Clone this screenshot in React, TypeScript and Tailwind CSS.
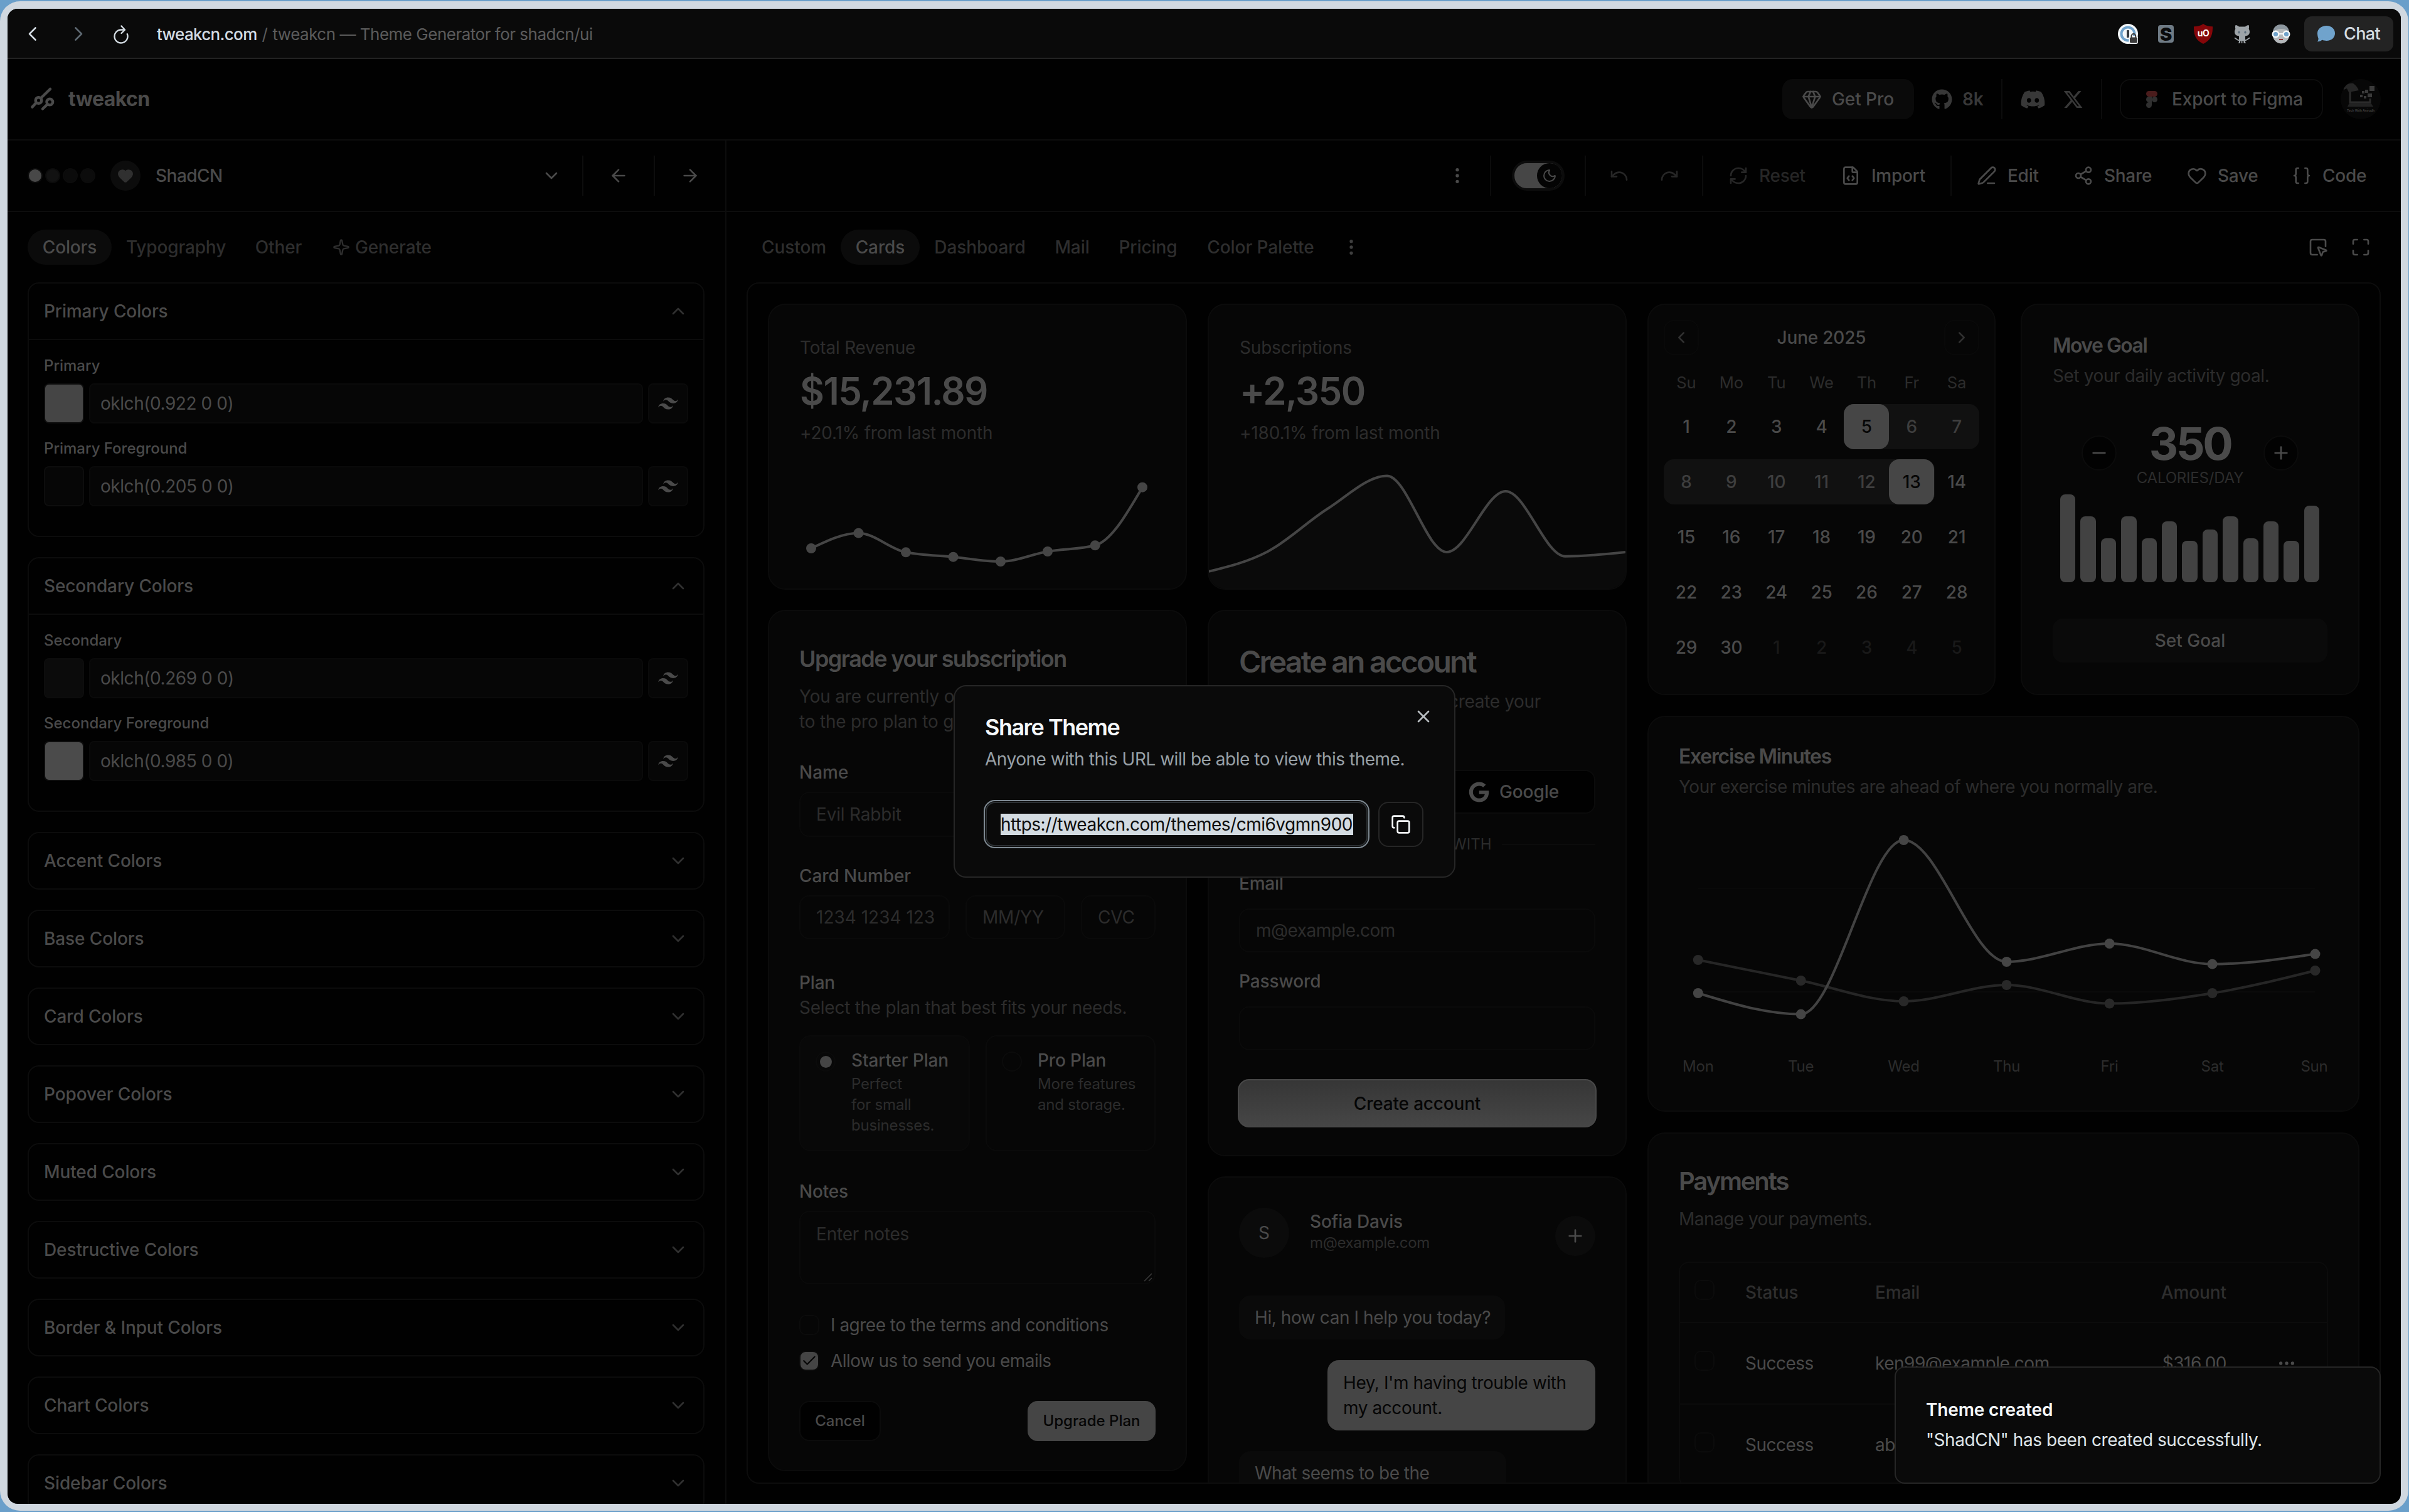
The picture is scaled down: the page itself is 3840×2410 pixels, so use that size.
import React from "react";
import {
  ArrowLeft,
  ArrowRight,
  Braces,
  Check,
  ChevronDown,
  ChevronLeft,
  ChevronRight,
  ChevronUp,
  Copy,
  Ellipsis,
  EllipsisVertical,
  FileCode,
  Gem,
  Heart,
  Maximize,
  Minus,
  Moon,
  PenLine,
  Plus,
  Redo,
  RefreshCw,
  Share2,
  Sparkle,
  SquareMousePointer,
  Undo,
  X,
} from "lucide-react";
import { FaDiscord, FaGithub, FaGoogle, FaXTwitter } from "react-icons/fa6";
import { SiTailwindcss } from "react-icons/si";

type Point = [number, number];

// Monotone cubic interpolation, the same curve d3's curveMonotoneX gives
function monotonePath(pts: Point[]) {
  const n = pts.length;
  const slope = pts.slice(1).map((p, i) => (p[1] - pts[i][1]) / (p[0] - pts[i][0]));
  const t: number[] = new Array(n).fill(0);
  for (let i = 1; i < n - 1; i++) {
    const a = slope[i - 1];
    const b = slope[i];
    t[i] = a * b <= 0 ? 0 : Math.sign(a) * Math.min(Math.abs(a), Math.abs(b), 0.25 * Math.abs(a + b)) * 2;
  }
  t[0] = (3 * slope[0] - t[1]) / 2;
  t[n - 1] = (3 * slope[n - 2] - t[n - 2]) / 2;
  let d = `M${pts[0][0]},${pts[0][1]}`;
  for (let i = 0; i < n - 1; i++) {
    const dx = (pts[i + 1][0] - pts[i][0]) / 3;
    d += `C${pts[i][0] + dx},${pts[i][1] + dx * t[i]} ${pts[i + 1][0] - dx},${pts[i + 1][1] - dx * t[i + 1]} ${pts[i + 1][0]},${pts[i + 1][1]}`;
  }
  return d;
}

const revenue: Point[] = [
  [1293, 874], [1368.5, 849.7], [1444, 880.3], [1519.5, 887.7],
  [1595, 895], [1670, 879], [1745.6, 869.3], [1821, 776.7],
];
const subscriptions: Point[] = [
  [1926, 911], [2021, 879], [2116, 811], [2211, 758.6],
  [2306, 880], [2400, 783], [2495, 886.7], [2591, 880],
];
const exerciseToday: Point[] = [
  [2706.8, 1582], [2870.7, 1615.6], [3034.6, 1338], [3198.6, 1532],
  [3362.6, 1503], [3526.5, 1535.7], [3690.5, 1519.6],
];
const exerciseAverage: Point[] = [
  [2706.8, 1529], [2870.7, 1562], [3034.6, 1595], [3198.6, 1569],
  [3362.6, 1598.6], [3526.5, 1582], [3690.5, 1546],
];
const weekDays = ["Mon", "Tue", "Wed", "Thu", "Fri", "Sat", "Sun"];
const goalBars = [140, 105, 70, 105, 70, 97, 66, 84, 105, 70, 97, 66, 122];

function BrowserBar() {
  return (
    <div className="flex h-[80px] shrink-0 items-center border-b-2 border-[#222222] bg-[#0a0a0a] pt-[2px] text-[26px] tracking-[-0.019em]">
      <div className="flex w-[238px] items-center">
        <svg className="ml-[32px] h-[24px] w-[16px]" viewBox="0 0 16 24" fill="none" stroke="#d3dbe2" strokeWidth="2.6" strokeLinecap="round" strokeLinejoin="round">
          <path d="M12.5 2.5 3 12l9.5 9.5" />
        </svg>
        <svg className="ml-[57px] h-[24px] w-[16px]" viewBox="0 0 16 24" fill="none" stroke="#5d6871" strokeWidth="2.6" strokeLinecap="round" strokeLinejoin="round">
          <path d="M3.5 2.5 13 12l-9.5 9.5" />
        </svg>
        <svg className="ml-[47px] h-[31px] w-[26px]" viewBox="0 0 26 31" fill="none" stroke="#d3dbe2" strokeWidth="2.4" strokeLinecap="round" strokeLinejoin="round">
          <path d="M22.8 15.2A10.5 10.5 0 1 1 13 8.5h5.500" />
          <path d="M13.500 2.500 19 8.500l-5.500 5.500" />
        </svg>
      </div>
      <div className="flex flex-1 gap-[8px]">
        <span className="font-medium tracking-[-0.026em] text-[#d3dbe2]">tweakcn.com</span>
        <span className="text-[#5b5b5b]">/</span>
        <span className="text-[#5b5b5b]">tweakcn — Theme Generator for shadcn/ui</span>
      </div>
      <div className="flex items-center">
        <svg className="h-[32px] w-[32px]" viewBox="0 0 32 32">
          <circle cx="16" cy="16" r="16" fill="#f4f7f9" />
          <circle cx="16" cy="16" r="10.500" fill="none" stroke="#70a3cc" strokeWidth="4" />
          <rect x="14" y="10" width="4" height="12" rx="1" fill="#33383d" />
          <rect x="17.500" y="19" width="14.500" height="13" rx="3" fill="#f4f7f9" />
          <rect x="19" y="21.500" width="12" height="9" rx="2" fill="#3a3a3a" />
          <path d="M21.500 22v-2.500a3.400 3.400 0 0 1 6.800 0V22" fill="none" stroke="#3a3a3a" strokeWidth="2" />
        </svg>
        <div className="ml-[32px] flex h-[28px] w-[25px] items-center justify-center rounded-[4px] bg-[#6f7b85] text-[29px] leading-none font-black text-[#0a0a0a]">
          S
        </div>
        <div className="relative ml-[32px] flex h-[32px] w-[30px] items-center justify-center pb-[3px]">
          <svg className="absolute inset-0" viewBox="0 0 30 32">
            <path d="M15 0c4 3 9 4.300 15 4.300C30.300 18 27 26 15 32 3 26-.3 18 0 4.300 6 4.300 11 3 15 0Z" fill="#850609" />
          </svg>
          <span className="relative text-[14px] leading-none font-bold text-white">uO</span>
        </div>
        <svg className="ml-[32px] h-[32px] w-[30px]" viewBox="0 0 30 32" fill="#9ea4a8">
          <path d="M4.500 2c2.500 0 4.500 1.500 5.500 2.500h10C21 3.500 23 2 25.500 2c.8 2.500.6 4.500.2 6 1 2 1.300 3.500 1.300 5 0 5-4.500 7-12 7S3 18 3 13c0-1.500.3-3 1.300-5-.4-1.500-.6-3.500.2-6Z" />
          <path d="M10 19h10v9c0 1.500.5 2 1.500 3h-3c-.7-1-.8-2-.8-4h-.7v4h-1.300v-4h-1.400v4H13v-4h-.7c0 2-.1 3-.8 4h-3c1-1 1.500-1.500 1.500-3Z" />
          <path d="M10 26c-4 .5-4-3-7-3.500M20 26c4 .5 4-3 7-3.500" fill="none" stroke="#9ea4a8" strokeWidth="1.800" />
          <ellipse cx="10" cy="13.500" rx="1.600" ry="2" fill="#5d6f7d" />
          <ellipse cx="20" cy="13.500" rx="1.600" ry="2" fill="#5d6f7d" />
        </svg>
        <svg className="ml-[31px] h-[32px] w-[32px]" viewBox="0 0 32 32">
          <ellipse cx="16" cy="16.500" rx="13.500" ry="15" fill="#b4b8bb" />
          <path d="M3 13C4 4 10 1 16 1s12 3 13 12c-4-4-8-5-13-5S6 10 3 13Z" fill="#8d979f" />
          <circle cx="7.500" cy="16.500" r="4.800" fill="#70a3cc" stroke="#f4f7f9" strokeWidth="2.400" />
          <circle cx="24.500" cy="16.500" r="4.800" fill="#70a3cc" stroke="#f4f7f9" strokeWidth="2.400" />
          <path d="M12.500 16h7" stroke="#f4f7f9" strokeWidth="2" />
          <path d="M13 25h6" stroke="#850609" strokeWidth="1.500" />
        </svg>
        <div className="mr-[12px] ml-[21px] flex h-[56px] w-[142px] items-center gap-[13px] rounded-[12px] bg-[#232323] pl-[20px] text-[27px] font-medium tracking-[-0.024em] text-[#d3dbe2]">
          <svg className="h-[28px] w-[30px]" viewBox="0 0 30 28" fill="#70a3cc">
            <path d="M15.500 1C23.500 1 29 6 29 13s-5.500 12-13.500 12c-2.600 0-5-.4-7-1.400C6.500 25.600 4 26.400 1 26.200c1.300-1.600 1.700-3.500 1.500-5.200C1.500 18.700 1 15.800 1 13 1 6 7.500 1 15.500 1Z" />
          </svg>
          Chat
        </div>
      </div>
    </div>
  );
}

function SiteHeader() {
  return (
    <header className="flex h-[130px] shrink-0 items-center justify-between border-b-2 border-[#0d0d0d] pr-[32px] pl-[34px] text-[28px] font-medium tracking-[-0.003em] text-[#4a4a4a]">
      <div className="flex items-center gap-[19px]">
        <svg className="h-[42px] w-[44px]" viewBox="46 136 44 42" fill="none" stroke="#4a4a4a" strokeWidth="4.500" strokeLinecap="round">
          <circle cx="61.500" cy="159" r="4.800" />
          <circle cx="79.300" cy="161.500" r="4.800" />
          <path d="M80 141 65.500 155M57.500 163l-6 6.500M75.300 165.500l-7.300 7" />
        </svg>
        <span className="text-[32px] font-bold tracking-[-0.018em]">tweakcn</span>
      </div>
      <div className="flex items-center gap-[28px]">
        <div className="flex h-[64px] w-[210px] items-center gap-[16px] rounded-[16px] bg-[#0a0a0a] pl-[31px]">
          <Gem size={32} />
          Get Pro
        </div>
        <div className="flex w-[83px] items-center gap-[16px] font-semibold text-[#383838]">
          <FaGithub size={33} className="shrink-0" />
          8k
        </div>
        <div className="h-[64px] w-[2px] bg-[#0c0c0c]" />
        <div className="flex w-[101px] items-center justify-between text-[#383838]">
          <FaDiscord size={41} />
          <FaXTwitter size={33} />
        </div>
        <div className="h-[64px] w-[2px] bg-[#0c0c0c]" />
        <div className="flex h-[64px] w-[324px] items-center rounded-[16px] border-2 border-[#0d0d0d] pl-[40px]">
          <svg className="h-[27px] w-[18px]" viewBox="0 0 18 27" fill="#303030">
            <path d="M4.500 0H13.500a4.500 4.500 0 0 1 0 9H4.500a4.500 4.500 0 0 1 0-9Z" fill="#4a1c1c" />
            <path d="M4.500 9H9v9H4.500a4.500 4.500 0 0 1 0-9Z" />
            <circle cx="13.500" cy="13.500" r="4.500" />
            <path d="M4.500 18H9v4.500A4.500 4.500 0 1 1 4.500 18Z" />
          </svg>
          <span className="ml-[23px]">Export to Figma</span>
        </div>
        <div className="relative h-[64px] w-[64px] overflow-hidden rounded-full bg-[#070707]">
          <svg viewBox="0 0 64 64" className="h-full w-full">
            <path d="M4 14c4-5 9-8 16-7 5 3 7 7 9 11l-16 3-3-6-5 2Z" fill="#262626" />
            <path d="M15 20v17h32v-6" fill="none" stroke="#2b2b2b" strokeWidth="3" />
            <path d="M14 38h34l4 6H11Z" fill="#222222" />
            <g fill="#3a3a3a">
              <rect x="46" y="11" width="8" height="8" />
              <rect x="39" y="17" width="5" height="5" />
              <rect x="43" y="23" width="7" height="6" />
              <rect x="34" y="19" width="4" height="4" />
              <rect x="31" y="25" width="4" height="4" />
              <rect x="37" y="27" width="4" height="4" />
            </g>
            <text x="32" y="51.500" textAnchor="middle" fontSize="5" fontWeight="700" fill="#3d3d3d">Tech With Anirudh</text>
          </svg>
        </div>
      </div>
    </header>
  );
}

function ColorField({ label, value, swatch }: { label: string; value: string; swatch: string }) {
  return (
    <div>
      <div className="text-[24px] leading-[32px] font-medium tracking-normal">{label}</div>
      <div className="mt-[12px] flex h-[64px] gap-[8px]">
        <div className="w-[64px] shrink-0 overflow-hidden rounded-[8px] border-2 border-[#0d0d0d]" style={{ backgroundColor: swatch }} />
        <div className="flex w-[883px] items-center rounded-[8px] border-2 border-[#0a0a0a] bg-[#060606] pl-[16px] text-[28px] tracking-[-0.016em]">
          {value}
        </div>
        <div className="flex w-[64px] shrink-0 items-center justify-center rounded-[8px] border-2 border-[#0a0a0a] bg-[#060606]">
          <SiTailwindcss size={32} />
        </div>
      </div>
    </div>
  );
}

function ColorSection({ title, children }: { title: string; children?: React.ReactNode }) {
  return (
    <section className="w-[1079px] shrink-0 rounded-[18px] border-2 border-[#0c0c0c]">
      <div className={children ? "flex h-[90px] items-center justify-between border-b-2 border-[#0c0c0c] px-[24px]" : "flex h-[88px] items-center justify-between px-[24px]"}>
        <h3 className="text-[28px] font-medium tracking-[-0.004em]">{title}</h3>
        {children ? <ChevronUp size={32} className="text-[#303030]" /> : <ChevronDown size={32} className="text-[#303030]" />}
      </div>
      {children && <div className="flex flex-col gap-[24px] px-[24px] pt-[25px] pb-[47px]">{children}</div>}
    </section>
  );
}

function Sidebar() {
  return (
    <aside className="flex w-[1146px] shrink-0 flex-col overflow-hidden border-r-2 border-[#0c0c0c] text-[#4a4a4a]">
      {/* Preset picker */}
      <div className="flex h-[114px] shrink-0 items-center border-b-2 border-[#0d0d0d] pl-[32px]">
        <div className="flex gap-[4px]">
          <div className="h-[24px] w-[24px] rounded-full border-2 border-[#0c0c0c] bg-[#484848]" />
          <div className="h-[24px] w-[24px] rounded-full border-2 border-[#0c0c0c] bg-[#121212]" />
          <div className="h-[24px] w-[24px] rounded-full border-2 border-[#0c0c0c] bg-[#0b0b0b]" />
          <div className="h-[24px] w-[24px] rounded-full border-2 border-[#0c0c0c] bg-[#0c0c0c]" />
        </div>
        <div className="ml-[24px] flex h-[48px] w-[48px] items-center justify-center rounded-full bg-[#0c0c0c]">
          <Heart size={26} className="fill-[#303030] text-[#303030]" />
        </div>
        <span className="ml-[24px] w-[616px] text-[28px] font-medium tracking-[-0.018em]">ShadCN</span>
        <ChevronDown size={32} />
        <div className="ml-[33px] h-[64px] w-[2px] bg-[#0d0d0d]" />
        <div className="flex w-[112px] justify-center"><ArrowLeft size={32} /></div>
        <div className="h-[64px] w-[2px] bg-[#0d0d0d]" />
        <div className="flex w-[112px] justify-center"><ArrowRight size={32} /></div>
      </div>

      <div className="flex h-[84px] shrink-0 items-center pt-[28px] pl-[32px] text-[28px] font-medium tracking-[-0.005em] text-[#2e2e2e]">
        <div className="flex h-[56px] w-[134px] items-center justify-center rounded-full bg-[#0b0b0b] text-[#4a4a4a]">Colors</div>
        <div className="w-[205px] text-center">Typography</div>
        <div className="w-[122px] text-center">Other</div>
        <div className="flex items-center gap-[8px] pl-[25px]">
          <Sparkle size={28} />
          Generate
        </div>
      </div>

      <div className="mt-[28px] flex flex-col gap-[32px] pl-[32px]">
        <ColorSection title="Primary Colors">
          <ColorField label="Primary" value="oklch(0.922 0 0)" swatch="#454545" />
          <ColorField label="Primary Foreground" value="oklch(0.205 0 0)" swatch="#060606" />
        </ColorSection>
        <ColorSection title="Secondary Colors">
          <ColorField label="Secondary" value="oklch(0.269 0 0)" swatch="#0b0b0b" />
          <ColorField label="Secondary Foreground" value="oklch(0.985 0 0)" swatch="#4b4b4b" />
        </ColorSection>
        <ColorSection title="Accent Colors" />
        <ColorSection title="Base Colors" />
        <ColorSection title="Card Colors" />
        <ColorSection title="Popover Colors" />
        <ColorSection title="Muted Colors" />
        <ColorSection title="Destructive Colors" />
        <ColorSection title="Border & Input Colors" />
        <ColorSection title="Chart Colors" />
        <ColorSection title="Sidebar Colors" />
      </div>
    </aside>
  );
}

function Divider() {
  return <div className="mx-[16px] h-[64px] w-[2px] shrink-0 bg-[#0c0c0c]" />;
}

function Toolbar() {
  const button = "flex shrink-0 items-center gap-[17px] pl-[24px]";
  return (
    <div className="flex h-[114px] shrink-0 items-center justify-end border-b-2 border-[#0d0d0d] pr-[32px] text-[28px] font-medium tracking-[-0.01em] text-[#4a4a4a]">
      <div className="flex w-[72px] justify-center"><EllipsisVertical size={32} /></div>
      <Divider />
      <div className="mr-[16px] ml-[17px] flex h-[48px] w-[84px] items-center justify-end rounded-full border-4 border-[#0c0c0c] bg-[#464646]">
        <div className="flex h-[40px] w-[40px] items-center justify-center rounded-full bg-[#040404]">
          <Moon size={24} />
        </div>
      </div>
      <Divider />
      <div className="flex w-[73px] justify-center text-[#262626]"><Undo size={32} /></div>
      <div className="ml-[8px] flex w-[72px] justify-center text-[#262626]"><Redo size={32} /></div>
      <Divider />
      <div className={`${button} w-[171px] text-[#262626]`}><RefreshCw size={32} />Reset</div>
      <div className={`${button} ml-[8px] w-[183px]`}><FileCode size={32} />Import</div>
      <Divider />
      <div className={`${button} w-[146px]`}><PenLine size={32} />Edit</div>
      <div className={`${button} ml-[8px] w-[173px]`}><Share2 size={32} />Share</div>
      <div className={`${button} ml-[8px] w-[159px]`}><Heart size={32} />Save</div>
      <div className={`${button} ml-[8px] w-[166px]`}><Braces size={32} />Code</div>
    </div>
  );
}

function PreviewTabs() {
  return (
    <div className="flex h-[84px] shrink-0 items-center pt-[28px] pl-[33px] text-[28px] font-medium tracking-[-0.003em] text-[#2e2e2e]">
      <div className="w-[149px] text-center">Custom</div>
      <div className="flex h-[56px] w-[126px] items-center justify-center rounded-full bg-[#0b0b0b] text-[#4a4a4a]">Cards</div>
      <div className="w-[192px] text-center">Dashboard</div>
      <div className="w-[102px] text-center">Mail</div>
      <div className="w-[140px] text-center">Pricing</div>
      <div className="w-[219px] text-center">Color Palette</div>
      <div className="flex w-[70px] justify-center text-[#3e3e3e]"><EllipsisVertical size={32} /></div>
      <div className="ml-auto flex gap-[36px] pr-[48px] text-[#4a4a4a]">
        <SquareMousePointer size={32} />
        <Maximize size={32} />
      </div>
    </div>
  );
}

function Card({ className = "", children }: { className?: string; children: React.ReactNode }) {
  return <div className={`shrink-0 overflow-hidden rounded-[28px] border-2 border-[#0b0b0b] bg-[#060606] ${className}`}>{children}</div>;
}

function StatHeader({ label, value, delta }: { label: string; value: string; delta: string }) {
  return (
    <div className="px-[49px] pt-[48px] text-[28px] leading-[40px] text-[#2c2c2c]">
      <div>{label}</div>
      <div className="mt-[13px] text-[60px] leading-[72px] font-semibold tracking-[-0.027em] text-[#4a4a4a]">{value}</div>
      <div className="mt-[11px]">{delta}</div>
    </div>
  );
}

function RevenueCard() {
  return (
    <Card className="h-[456px]">
      <StatHeader label="Total Revenue" value="$15,231.89" delta="+20.1% from last month" />
      <svg className="block h-[228px] w-[664px]" viewBox="1226 710 664 228">
        <path d={monotonePath(revenue)} fill="none" stroke="#454545" strokeWidth="4" />
        {revenue.map(([x, y]) => <circle key={x} cx={x} cy={y} r="8" fill="#454545" />)}
      </svg>
    </Card>
  );
}

function SubscriptionsCard() {
  const line = monotonePath(subscriptions);
  return (
    <Card className="h-[456px]">
      <StatHeader label="Subscriptions" value="+2,350" delta="+180.1% from last month" />
      <svg className="block h-[228px] w-[664px]" viewBox="1927 710 664 228">
        <path d={`${line}L2591,938L1926,938Z`} fill="#0a0a0a" />
        <path d={line} fill="none" stroke="#454545" strokeWidth="4" />
      </svg>
    </Card>
  );
}

function Field({ className = "", children }: { className?: string; children?: React.ReactNode }) {
  return <div className={`flex items-center overflow-hidden rounded-[16px] border-2 border-[#0a0a0a] pl-[25px] text-[#2c2c2c] ${className}`}>{children}</div>;
}

function UpgradeCard() {
  return (
    <Card className="h-[1373px] px-[48px] text-[28px] text-[#4a4a4a]">
      <h2 className="pt-[56px] text-[36px] leading-[40px] font-semibold tracking-[-0.043em]">Upgrade your subscription</h2>
      <p className="mt-[20px] leading-[40px] whitespace-nowrap text-[#2c2c2c]">
        You are currently on the free plan. Upgrade
        <br />
        to the pro plan to get access to all features.
      </p>
      <div className="mt-[47px] leading-[28px] font-medium tracking-normal">Name</div>
      <div className="mt-[17px] flex gap-[25px]">
        <Field className="h-[72px] w-[272px]">Evil Rabbit</Field>
        <Field className="h-[72px] w-[271px] whitespace-nowrap">example@acme.com</Field>
      </div>
      <div className="mt-[48px] leading-[28px] font-medium tracking-[-0.003em]">Card Number</div>
      <div className="mt-[17px] flex gap-[25px]">
        <Field className="h-[70px] w-[240px]"><span className="tracking-normal whitespace-nowrap">1234 1234 123</span></Field>
        <Field className="h-[70px] w-[159px]">MM/YY</Field>
        <Field className="h-[70px] w-[119px]">CVC</Field>
      </div>
      <div className="mt-[55px] leading-[28px] font-medium">Plan</div>
      <div className="mt-[6px] leading-[40px] tracking-[-0.009em] whitespace-nowrap text-[#2c2c2c]">Select the plan that best fits your needs.</div>
      <div className="mt-[24px] flex h-[185px] gap-[25px]">
        <div className="flex w-[272px] rounded-[18px] border-2 border-[#0a0a0a] bg-[#080808] pt-[24px] pl-[24px]">
          <div className="flex h-[32px] w-[32px] items-center justify-center rounded-full border-2 border-[#0b0b0b]">
            <div className="h-[19px] w-[19px] rounded-full bg-[#454545]" />
          </div>
          <div className="ml-[25px] leading-[28px]">
            <div className="font-medium tracking-[-0.005em] whitespace-nowrap">Starter Plan</div>
            <div className="mt-[7px] text-[24px] leading-[33px] text-[#2c2c2c]">Perfect<br />for small<br />businesses.</div>
          </div>
        </div>
        <div className="flex w-[271px] rounded-[18px] border-2 border-[#0a0a0a] pt-[24px] pl-[24px]">
          <div className="h-[32px] w-[32px] rounded-full border-2 border-[#0b0b0b]" />
          <div className="ml-[25px] leading-[28px]">
            <div className="font-medium tracking-[-0.005em]">Pro Plan</div>
            <div className="mt-[7px] text-[24px] leading-[33px] whitespace-nowrap text-[#2c2c2c]">More features<br />and storage.</div>
          </div>
        </div>
      </div>
      <div className="mt-[50px] leading-[28px] font-medium">Notes</div>
      <div className="relative mt-[17px] h-[117px] rounded-[16px] border-2 border-[#0a0a0a] pt-[15px] pl-[25px] leading-[40px] text-[#2c2c2c]">
        Enter notes
        <svg className="absolute right-[3px] bottom-[2px] h-[14px] w-[14px]" viewBox="0 0 14 14" stroke="#3a3a3a" strokeWidth="1.500">
          <path d="M1 13 13 1M8 13l5-5" />
        </svg>
      </div>
      <div className="mt-[49px] flex h-[32px] items-center gap-[18px] tracking-[-0.018em]">
        <div className="h-[32px] w-[32px] rounded-[10px] border-2 border-[#0b0b0b]" />
        I agree to the terms and conditions
      </div>
      <div className="mt-[25px] flex h-[32px] items-center gap-[18px] tracking-[-0.02em]">
        <div className="flex h-[32px] w-[32px] items-center justify-center rounded-[10px] border-2 border-[#0b0b0b] bg-[#454545]">
          <Check size={26} className="text-[#060606]" />
        </div>
        Allow us to send you emails
      </div>
      <div className="mt-[48px] flex h-[64px] justify-between text-[24px] font-medium tracking-normal">
        <div className="flex w-[130px] items-center justify-center rounded-[16px] border-2 border-[#0b0b0b] bg-[#010101]">Cancel</div>
        <div className="flex w-[204px] items-center justify-center rounded-[16px] bg-[#454545] text-[#060606]">Upgrade Plan</div>
      </div>
    </Card>
  );
}

function CreateAccountCard() {
  return (
    <Card className="h-[871px] px-[48px] text-[28px] text-[#4a4a4a]">
      <h2 className="pt-[53px] text-[48px] leading-[56px] font-semibold tracking-[-0.058em]">Create an account</h2>
      <p className="mt-[15px] h-[80px] leading-[40px] tracking-[-0.012em] text-[#2c2c2c]">
        <span className="whitespace-nowrap">Enter your email below to create your</span>
        <br />
        account
      </p>
      <div className="mt-[49px] flex h-[70px] justify-between font-medium tracking-[-0.003em]">
        <div className="flex w-[260px] items-center justify-center gap-[16px] rounded-[16px] border-2 border-[#0b0b0b] bg-[#010101]">
          <FaGithub size={32} />
          GitHub
        </div>
        <div className="flex w-[260px] items-center justify-center gap-[16px] rounded-[16px] border-2 border-[#0b0b0b] bg-[#010101]">
          <FaGoogle size={33} />
          Google
        </div>
      </div>
      <div className="mt-[33px] flex h-[32px] items-center gap-[16px] text-[24px] tracking-normal whitespace-nowrap text-[#2c2c2c]">
        <div className="h-[2px] flex-1 bg-[#0b0b0b]" />
        OR CONTINUE WITH
        <div className="h-[2px] flex-1 bg-[#0b0b0b]" />
      </div>
      <div className="mt-[32px] leading-[28px] font-medium">Email</div>
      <Field className="mt-[26px] h-[70px] tracking-[-0.018em]">m@example.com</Field>
      <div className="mt-[32px] leading-[28px] font-medium tracking-[-0.003em]">Password</div>
      <Field className="mt-[26px] h-[70px]" />
      <div className="-mx-[2px] mt-[46px] flex h-[77px] items-center justify-center rounded-[18px] border-2 border-[#484848] bg-gradient-to-b from-[#363636] to-[#464646] font-medium text-[#050505]">
        Create account
      </div>
    </Card>
  );
}

function ChatCard() {
  return (
    <Card className="h-[900px] px-[48px] pt-[48px] text-[28px] text-[#4a4a4a]">
      <div className="flex h-[80px] items-start">
        <div className="flex h-[80px] w-[80px] items-center justify-center rounded-full bg-[#0b0b0b]">S</div>
        <div className="mt-[4px] ml-[33px]">
          <div className="leading-[36px] font-medium">Sofia Davis</div>
          <div className="text-[24px] leading-[32px] tracking-[-0.016em] text-[#2c2c2c]">m@example.com</div>
        </div>
        <div className="mt-[13px] ml-auto flex h-[64px] w-[64px] items-center justify-center rounded-full bg-[#0b0b0b]">
          <Plus size={32} />
        </div>
      </div>
      <div className="mt-[60px] flex h-[70px] w-[424px] items-center rounded-[18px] bg-[#0a0a0a] pl-[25px] tracking-[-0.015em] whitespace-nowrap">
        Hi, how can I help you today?
      </div>
      <div className="mt-[33px] ml-auto h-[112px] w-[427px] rounded-[18px] bg-[#454545] pt-[16px] pl-[25px] leading-[40px] tracking-[-0.015em] whitespace-nowrap text-[#060606]">
        Hey, I'm having trouble with
        <br />
        my account.
      </div>
      <div className="mt-[33px] h-[112px] w-[426px] rounded-[18px] bg-[#0a0a0a] pt-[15px] pl-[25px] leading-[40px] tracking-[-0.018em] whitespace-nowrap">
        What seems to be the
        <br />
        problem?
      </div>
    </Card>
  );
}

function dayClass(row: number, col: number) {
  if ((row === 0 && col === 4) || (row === 1 && col === 5)) return "bg-[#464646] text-[#060606] rounded-[16px]";
  if (row === 0 && col > 4) return "text-[#3e3e3e]";
  if (row === 1 && col < 5) return "text-[#3e3e3e]";
  if (row === 4 && col > 1) return "text-[#191919]";
  return "text-[#4a4a4a]";
}

function CalendarCard() {
  return (
    <Card className="h-[624px] w-[555px] px-[24px] pt-[24px]">
      <div className="flex h-[56px] w-[503px] items-center justify-between text-[28px] font-medium tracking-[-0.007em] text-[#4a4a4a]">
        <div className="flex h-[56px] w-[56px] items-center justify-center rounded-[16px] border-2 border-[#090909] text-[#303030]"><ChevronLeft size={30} /></div>
        June 2025
        <div className="flex h-[56px] w-[56px] items-center justify-center rounded-[16px] border-2 border-[#090909] text-[#303030]"><ChevronRight size={30} /></div>
      </div>
      <div className="mt-[24px] grid h-[40px] w-[503px] grid-cols-7 items-center text-center text-[25.600px] text-[#2c2c2c]">
        {["Su", "Mo", "Tu", "We", "Th", "Fr", "Sa"].map((d) => <div key={d}>{d}</div>)}
      </div>
      <div className="mt-[14px] flex flex-col gap-[16px]">
        {[0, 1, 2, 3, 4].map((row) => (
          <div key={row} className="relative flex h-[72px] w-[503px]">
            {row === 0 && <div className="absolute top-0 right-0 h-full w-[216px] rounded-[16px] bg-[#111111]" />}
            {row === 1 && <div className="absolute top-0 left-0 h-full w-[432px] rounded-[16px] bg-[#111111]" />}
            {[0, 1, 2, 3, 4, 5, 6].map((col) => {
              const day = row * 7 + col + 1;
              return (
                <div key={col} className={`relative flex flex-1 items-center justify-center text-[28px] font-medium ${dayClass(row, col)}`}>
                  {day > 30 ? day - 30 : day}
                </div>
              );
            })}
          </div>
        ))}
      </div>
    </Card>
  );
}

function MoveGoalCard() {
  return (
    <Card className="h-[624px] w-[540px] px-[49px] text-[28px] text-[#4a4a4a]">
      <h2 className="pt-[45px] text-[32px] leading-[40px] font-semibold tracking-[-0.048em]">Move Goal</h2>
      <p className="mt-[8px] leading-[40px] tracking-[-0.014em] whitespace-nowrap text-[#2c2c2c]">Set your daily activity goal.</p>
      <div className="mt-[52px] flex h-[109px] items-start justify-between px-[46px]">
        <div className="mt-[23px] flex h-[56px] w-[56px] items-center justify-center rounded-full border-2 border-[#0b0b0b] bg-[#020202]"><Minus size={32} /></div>
        <div className="text-center">
          <div className="text-[72px] leading-[72px] font-bold tracking-tighter">350</div>
          <div className="text-[24px] leading-[37px] text-[#2c2c2c]">CALORIES/DAY</div>
        </div>
        <div className="mt-[23px] flex h-[56px] w-[56px] items-center justify-center rounded-full border-2 border-[#0b0b0b] bg-[#020202]"><Plus size={32} /></div>
      </div>
      <div className="mt-[7px] flex h-[141px] items-end gap-[8px] pr-[13px] pl-[12px]">
        {goalBars.map((h, i) => (
          <div key={i} className="flex-1 rounded-[8px] bg-[#424242]" style={{ height: h }} />
        ))}
      </div>
      <div className="mt-[58px] flex h-[70px] items-center justify-center rounded-[16px] bg-[#0a0a0a] font-medium tracking-normal">Set Goal</div>
    </Card>
  );
}

function ExerciseCard() {
  return (
    <Card className="h-[631px]">
      <div className="px-[48px] pt-[43px] text-[28px] text-[#2c2c2c]">
        <h2 className="text-[32px] leading-[40px] font-semibold tracking-[-0.041em] text-[#4a4a4a]">Exercise Minutes</h2>
        <p className="mt-[8px] leading-[40px] tracking-[-0.018em]">Your exercise minutes are ahead of where you normally are.</p>
      </div>
      <svg className="block h-[495px] w-[1131px]" viewBox="2628 1273 1131 495">
        <path d="M2707 1414.700H3690M2707 1580H3690" stroke="#0a0a0a" strokeWidth="2" />
        <path d={monotonePath(exerciseAverage)} fill="none" stroke="#262626" strokeWidth="4" />
        {exerciseAverage.map(([x, y]) => <circle key={x} cx={x} cy={y} r="8" fill="#282828" />)}
        <path d={monotonePath(exerciseToday)} fill="none" stroke="#424242" strokeWidth="4" />
        {exerciseToday.map(([x, y]) => <circle key={x} cx={x} cy={y} r="8" fill="#454545" />)}
        {weekDays.map((d, i) => (
          <text key={d} x={i === 6 ? 3689 : exerciseToday[i][0]} y="1707" textAnchor="middle" fontSize="24" fill="#2c2c2c">{d}</text>
        ))}
      </svg>
    </Card>
  );
}

function PaymentRow({ status, email, amount, header }: { status: string; email: string; amount: string; header?: boolean }) {
  return (
    <div className={header ? "flex h-[96px] items-center border-b-2 border-[#0b0b0b] font-medium tracking-[-0.004em] text-[#2e2e2e]" : "flex h-[130px] items-center border-b-2 border-[#0b0b0b] tracking-[-0.018em] text-[#4a4a4a]"}>
      <div className="mb-[8px] ml-[23px] h-[32px] w-[32px] rounded-[10px] border-2 border-[#0b0b0b]" />
      <div className="ml-[49px] w-[207px]">{status}</div>
      <div className="w-[360px]">{email}</div>
      <div className="w-[200px] text-right">{amount}</div>
      {!header && <Ellipsis size={32} className="ml-[80px]" />}
    </div>
  );
}

function PaymentsCard() {
  return (
    <Card className="h-[1100px] px-[48px] text-[28px] text-[#2c2c2c]">
      <h2 className="pt-[52px] text-[40px] leading-[48px] font-semibold tracking-[-0.053em] text-[#4a4a4a]">Payments</h2>
      <p className="mt-[16px] leading-[40px] tracking-[-0.019em]">Manage your payments.</p>
      <div className="mt-[48px] rounded-[16px] border-2 border-[#0b0b0b]">
        <PaymentRow header status="Status" email="Email" amount="Amount" />
        <PaymentRow status="Success" email="ken99@example.com" amount="$316.00" />
        <PaymentRow status="Success" email="abe45@example.com" amount="$242.00" />
      </div>
    </Card>
  );
}

function Preview() {
  return (
    <div className="mt-[28px] ml-[32px] flex h-[1915px] w-[2605px] shrink-0 gap-[33px] overflow-hidden rounded-[20px] border-2 border-[#0c0c0c] pt-[32px] pl-[32px]">
      <div className="flex w-[668px] shrink-0 flex-col gap-[32px]">
        <RevenueCard />
        <UpgradeCard />
      </div>
      <div className="flex w-[668px] shrink-0 flex-col gap-[32px]">
        <SubscriptionsCard />
        <CreateAccountCard />
        <ChatCard />
      </div>
      <div className="flex w-[1135px] shrink-0 flex-col gap-[33px]">
        <div className="flex justify-between">
          <CalendarCard />
          <MoveGoalCard />
        </div>
        <ExerciseCard />
        <PaymentsCard />
      </div>
    </div>
  );
}

function ShareDialog() {
  return (
    <div className="absolute top-[1092px] left-[1520px] h-[307px] w-[800px] rounded-[20px] border-2 border-[#262626] bg-[#0a0a0a] pl-[48px] text-[28px]">
      <X size={32} className="absolute top-[32px] right-[33px] text-[#b9bec2]" />
      <h2 className="pt-[45px] text-[36px] leading-[40px] font-semibold tracking-[-0.042em] text-[#f5f8fa]">Share Theme</h2>
      <p className="mt-[11px] leading-[40px] tracking-[-0.017em] whitespace-nowrap text-[#98a0a6]">Anyone with this URL will be able to view this theme.</p>
      <div className="mt-[45px] -ml-[2px] flex h-[77px] w-[701px] items-center justify-between">
        <div className="h-[77px] w-[615px] rounded-[18px] border-2 border-[#7d8891] p-[1px]">
          <div className="flex h-full items-center rounded-[15px] border-2 border-[#2c3033] pl-[22px]">
            <span className="h-[34px] w-[562px] bg-[#d3dbe1] leading-[34px] tracking-[-0.5px] whitespace-nowrap text-[#0d0d0d]">
              https://tweakcn.com/themes/cmi6vgmn900
            </span>
          </div>
        </div>
        <div className="flex h-[72px] w-[72px] items-center justify-center rounded-[16px] border-2 border-[#262626]">
          <Copy size={32} className="text-[#f5f8fa]" />
        </div>
      </div>
    </div>
  );
}

function Toast() {
  return (
    <div className="absolute top-[2178px] left-[3020px] h-[187px] w-[775px] rounded-[16px] border-2 border-[#262626] bg-[#0a0a0a] pl-[48px] text-[28px] leading-[40px] whitespace-nowrap">
      <div className="pt-[47px] font-semibold tracking-[-0.006em] text-[#f5f8fa]">Theme created</div>
      <div className="mt-[8px] tracking-[-0.016em] text-[#dfe5e9]">"ShadCN" has been created successfully.</div>
    </div>
  );
}

export default function App() {
  return (
    <div className="relative h-[2410px] w-[3840px] overflow-hidden bg-[#6a9fca] pt-[2px] font-['Inter','Liberation_Sans',sans-serif] tracking-[-0.012em]">
      <div className="h-[2406px] w-[3839px] rounded-[32px] bg-[#d0d8e0] pt-[12px] pl-[12px]">
        <div className="flex h-[2383px] w-[3815px] flex-col overflow-hidden rounded-[16px] bg-[#010101]">
          <BrowserBar />
          <SiteHeader />
          <div className="flex min-h-0 flex-1">
            <Sidebar />
            <main className="flex w-[2669px] flex-col overflow-hidden">
              <Toolbar />
              <PreviewTabs />
              <Preview />
            </main>
          </div>
        </div>
      </div>
      <ShareDialog />
      <Toast />
    </div>
  );
}
